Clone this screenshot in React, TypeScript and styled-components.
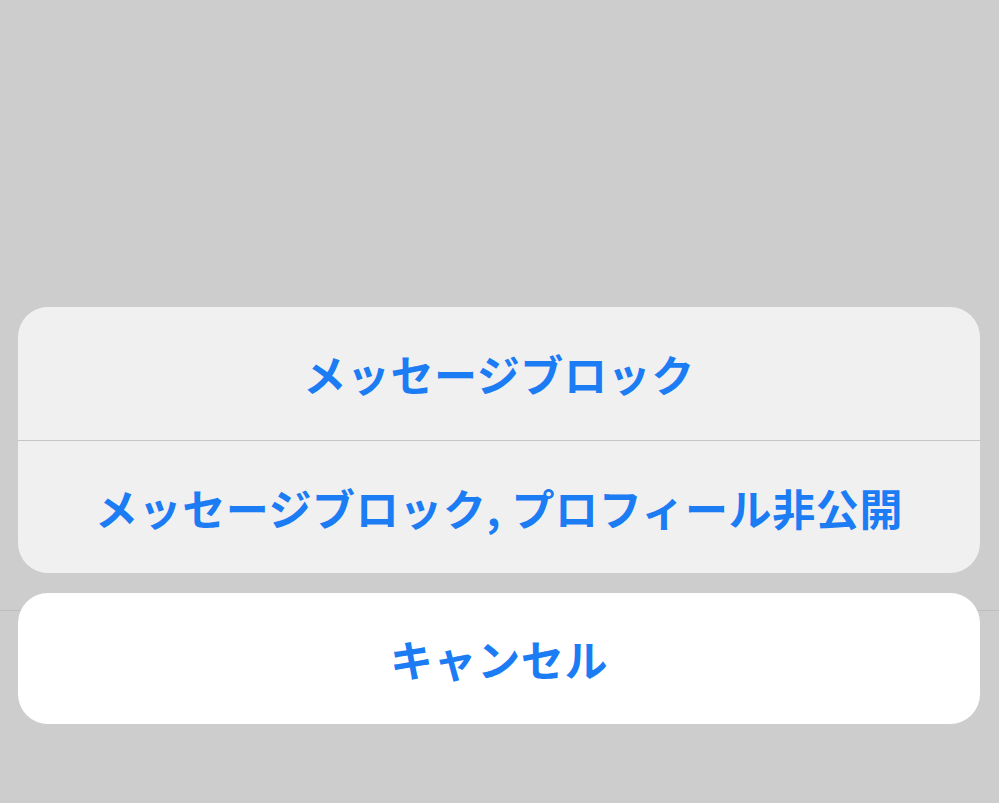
import React from "react";
import styled, { createGlobalStyle } from "styled-components";

const Global = createGlobalStyle`
  html, body {
    margin: 0;
    padding: 0;
    background: #cdcdcd;
  }
  * { box-sizing: border-box; }
`;

const Screen = styled.div`
  display: grid;
  width: 100%;
  height: 803px;
  background: #cdcdcd;
  overflow: hidden;
  font-family: "Noto Sans CJK JP", "Noto Sans", sans-serif;
`;

/* Dimmed page content that sits under the action sheet */
const Underlay = styled.div`
  grid-area: 1 / 1;
  height: 611px;
  border-bottom: 1px solid #bdbdbd;
`;

const Sheet = styled.div`
  grid-area: 1 / 1;
  display: flex;
  flex-direction: column;
  justify-content: flex-end;
  gap: 20px;
  padding: 0 19px 79px 18px;
  z-index: 1;
`;

const Group = styled.div`
  display: flex;
  flex-direction: column;
  background: #f0f0f0;
  border-radius: 30px;
  overflow: hidden;
`;

const Action = styled.button<{ $divider?: boolean; $cancel?: boolean }>`
  display: flex;
  align-items: center;
  justify-content: center;
  height: ${(p) => (p.$cancel ? 131 : 133)}px;
  border: 0;
  border-top: ${(p) => (p.$divider ? "1px solid #c6c6c6" : "0")};
  background: ${(p) => (p.$cancel ? "#ffffff" : "transparent")};
  border-radius: ${(p) => (p.$cancel ? "30px" : "0")};
  padding: 0;
  color: #1b7cf3;
  font-family: "Noto Sans CJK JP", "Noto Sans", sans-serif;
  font-size: 43px;
  font-weight: 700;
  letter-spacing: 0.6px;
  line-height: 1;
  cursor: pointer;
`;

export default function App() {
  return (
    <>
      <Global />
      <Screen>
        <Underlay />
        <Sheet>
          <Group>
            <Action>メッセージブロック</Action>
            <Action $divider>メッセージブロック, プロフィール非公開</Action>
          </Group>
          <Action $cancel>キャンセル</Action>
        </Sheet>
      </Screen>
    </>
  );
}
